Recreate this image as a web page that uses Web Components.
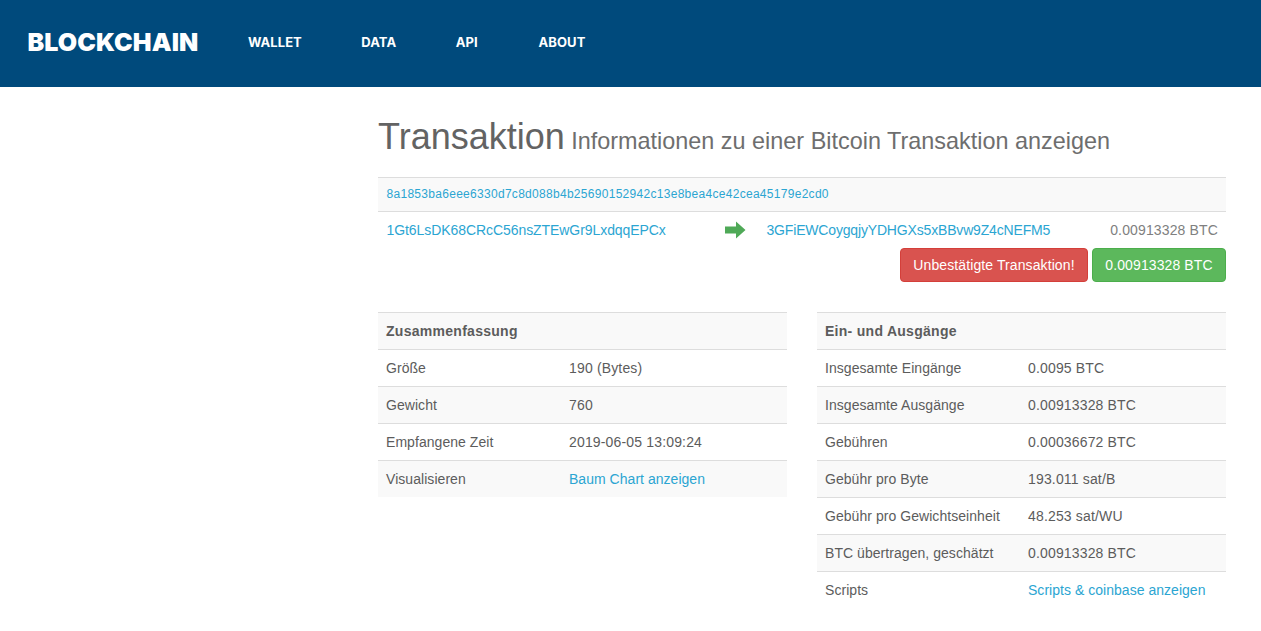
<!DOCTYPE html>
<html lang="de"><head><meta charset="utf-8"><title>Transaktion</title>
<style>html,body{margin:0;padding:0;background:#fff;font-family:"Liberation Sans",Arial,sans-serif;color:#555}</style>
</head><body>
<bc-header></bc-header>
<bc-page>
  <bc-title main="Transaktion" sub="Informationen zu einer Bitcoin Transaktion anzeigen"></bc-title>
  <bc-tx></bc-tx>
  <bc-columns>
    <bc-table heading="Zusammenfassung" data-rows='[["Größe","190 (Bytes)"],["Gewicht","760"],["Empfangene Zeit","2019-06-05 13:09:24"],["Visualisieren","@Baum Chart anzeigen"]]' col="183"></bc-table>
    <bc-table heading="Ein- und Ausgänge" data-rows='[["Insgesamte Eingänge","0.0095 BTC"],["Insgesamte Ausgänge","0.00913328 BTC"],["Gebühren","0.00036672 BTC"],["Gebühr pro Byte","193.011 sat/B"],["Gebühr pro Gewichtseinheit","48.253 sat/WU"],["BTC übertragen, geschätzt","0.00913328 BTC"],["Scripts","@Scripts &amp; coinbase anzeigen"]]' col="203"></bc-table>
  </bc-columns>
</bc-page>
<script>
function def(name,html,init){customElements.define(name,class extends HTMLElement{connectedCallback(){if(this.shadowRoot)return;const r=this.attachShadow({mode:"open"});r.innerHTML=html;init&&init(this,r)}})}
def("bc-header",`<style>
:host{display:flex;align-items:center;height:87px;background:#004a7c;color:#fff;box-sizing:border-box;padding:0 0 2px 27.5px}
.logo{font:900 25px/1 Inter,"Liberation Sans",sans-serif;letter-spacing:.1px;width:220.5px}
nav{display:flex;gap:59.5px}
a{font:700 13px/1 Inter,"Liberation Sans",sans-serif;letter-spacing:.05px;color:#fff;text-decoration:none}
a:last-child{margin-left:1.5px}
</style><div class="logo">BLOCKCHAIN</div><nav><a href="#">WALLET</a><a href="#">DATA</a><a href="#">API</a><a href="#">ABOUT</a></nav>`);
def("bc-page",`<style>:host{display:block;margin-left:378px;width:848px;padding-top:30px}</style><slot></slot>`);
def("bc-title",`<style>:host{display:block;height:60px;white-space:nowrap}
.m{font-size:36px;line-height:40px;color:#636363}.s{font-size:23.4px;color:#6e6e6e;margin-left:2px;letter-spacing:.01px}</style><span class="m"></span> <span class="s"></span>`,(h,r)=>{r.querySelector(".m").textContent=h.getAttribute("main");r.querySelector(".s").textContent=h.getAttribute("sub")});
def("bc-tx",`<style>:host{display:block;font-size:14px}
a{color:#2ba5d2;text-decoration:none}
.hash{height:33px;background:#f9f9f9;border-top:1px solid #ddd;border-bottom:1px solid #ddd;padding-left:8.5px;font-size:12px;line-height:33px;letter-spacing:.29px}
.flow{display:flex;align-items:center;height:36px;padding-left:8.5px;padding-right:8px}
.from{width:338px;letter-spacing:-.07px}.to{flex:1;letter-spacing:-.17px}.amt{color:#808080;letter-spacing:.14px}
svg{width:21px;height:18px;margin-right:21px;flex:none}
.btns{display:flex;justify-content:flex-end;gap:4px}
.btn{height:34px;box-sizing:border-box;border-radius:4px;color:#fff;line-height:33px;text-align:center;letter-spacing:.1px}
.r{width:188px;background:#d9534f;border:1px solid #d43f3a}.g{width:134px;background:#5cb85c;border:1px solid #4cae4c}
</style>
<div class="hash"><a href="#">8a1853ba6eee6330d7c8d088b4b25690152942c13e8bea4ce42cea45179e2cd0</a></div>
<div class="flow"><a class="from" href="#">1Gt6LsDK68CRcC56nsZTEwGr9LxdqqEPCx</a>
<svg viewBox="0 0 21 18"><path d="M0 5.5h11V0.5L20.5 9 11 17.5v-5H0z" fill="#4fa957"/></svg>
<a class="to" href="#">3GFiEWCoygqjyYDHGXs5xBBvw9Z4cNEFM5</a><span class="amt">0.00913328 BTC</span></div>
<div class="btns"><div class="btn r">Unbestätigte Transaktion!</div><div class="btn g">0.00913328 BTC</div></div>`);
def("bc-columns",`<style>:host{display:grid;grid-template-columns:409px 409px;justify-content:space-between;margin-top:30px}</style><slot></slot>`);
def("bc-table",`<style>:host{display:block;font-size:14px;color:#5c5c5c}
.row{display:grid;height:37px;box-sizing:border-box;border-top:1px solid #ddd;padding-left:8px;line-height:36px;align-items:start;letter-spacing:.05px}
.row:nth-child(odd){background:#f9f9f9}
.head{font-weight:700;letter-spacing:.28px}
.num{letter-spacing:.16px}
a{color:#2ba5d2;text-decoration:none;letter-spacing:.03px}
</style><div id="b"></div>`,(h,r)=>{
 const b=r.getElementById("b"),c=h.getAttribute("col");
 const head=document.createElement("div");head.className="row head";head.textContent=h.getAttribute("heading");b.append(head);
 JSON.parse(h.dataset.rows).forEach(([k,v])=>{const d=document.createElement("div");d.className="row";d.style.gridTemplateColumns=c+"px 1fr";
  const x=document.createElement("div");x.textContent=k;const y=document.createElement("div");
  if(v[0]=="@"){const a=document.createElement("a");a.href="#";a.innerHTML=v.slice(1);y.append(a)}else{y.textContent=v;y.className="num"}
  d.append(x,y);b.append(d)});
});
</script>
</body></html>
